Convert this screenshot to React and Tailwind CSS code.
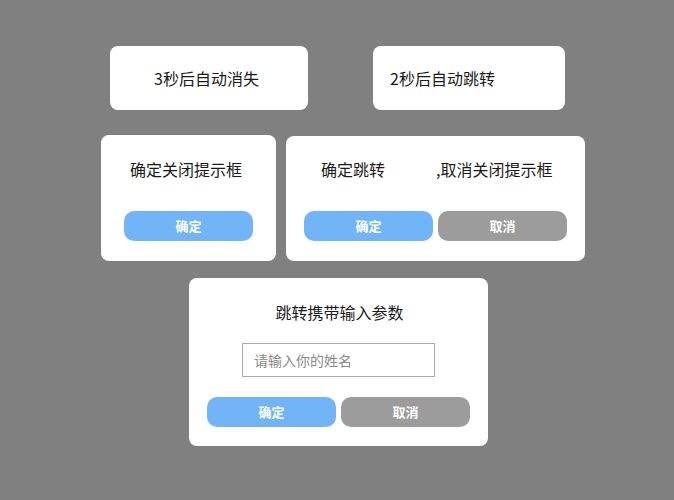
import React from "react";

const font = { fontFamily: '"Noto Sans CJK SC", "Noto Sans", sans-serif' };

const Btn = ({ label, gray }) => (
  <button
    className={
      "w-[129px] h-[30px] rounded-[10px] text-white text-[13px] font-bold flex items-center justify-center " +
      (gray ? "bg-[#9c9c9c]" : "bg-[#72b4f8]")
    }
  >
    {label}
  </button>
);

const App = () => {
  return (
    <div className="w-[674px] h-[500px] bg-[#808080] pt-[46px] text-[#1a1a1a]" style={font}>
      {/* toasts */}
      <div className="flex">
        <div className="ml-[110px] w-[198px] h-[64px] bg-white rounded-[8px] flex items-center justify-center pr-[5px] text-[16px]">
          3秒后自动消失
        </div>
        <div className="ml-[65px] w-[192px] h-[64px] bg-white rounded-[8px] flex items-center pl-[17px] text-[16px]">
          2秒后自动跳转
        </div>
      </div>

      {/* dialogs */}
      <div className="flex mt-[25px] ml-[101px] gap-[10px]">
        <div className="w-[175px] h-[126px] bg-white rounded-[8px] flex flex-col items-center pt-[22px]">
          <div className="text-[16px] leading-[24px] pr-[5px]">确定关闭提示框</div>
          <div className="mt-[30px]">
            <Btn label="确定" />
          </div>
        </div>
        <div className="w-[299px] h-[125px] mt-[1px] bg-white rounded-[8px] flex flex-col px-[18px] pt-[21px]">
          <div className="flex text-[16px] leading-[24px] pl-[17px]">
            <span>确定跳转</span>
            <span className="w-[51px]"></span>
            <span>,取消关闭提示框</span>
          </div>
          <div className="flex gap-[5px] mt-[30px]">
            <Btn label="确定" />
            <Btn label="取消" gray />
          </div>
        </div>
      </div>

      <div className="mt-[17px] ml-[189px] w-[299px] h-[168px] bg-white rounded-[8px] flex flex-col items-center px-[18px] pt-[22px]">
        <div className="text-[16px] leading-[24px] pl-[2px]">跳转携带输入参数</div>
        <input
          className="mt-[19px] w-[193px] h-[34px] border border-[#a9a9a9] px-[11px] text-[14px] outline-none placeholder:text-[#8a8a8a]"
          placeholder="请输入你的姓名"
          style={font}
        />
        <div className="flex gap-[5px] mt-[20px]">
          <Btn label="确定" />
          <Btn label="取消" gray />
        </div>
      </div>
    </div>
  );
};

export default App;
